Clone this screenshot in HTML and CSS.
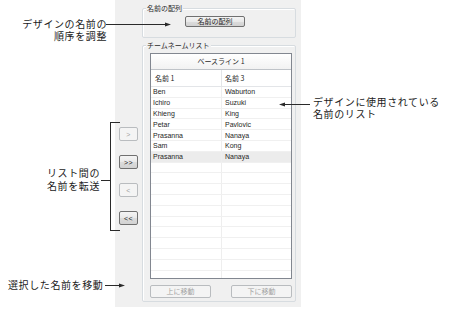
FILE: index.html
```html
<!DOCTYPE html>
<html lang="ja">
<head>
<meta charset="utf-8">
<title>チームネームリスト</title>
<link rel="stylesheet" href="styles.css">
</head>
<body>
<div class="page">
  <div class="panel">
    <div class="transfer">
      <div class="btn small disabled">&gt;</div>
      <div class="btn small">&gt;&gt;</div>
      <div class="btn small disabled">&lt;</div>
      <div class="btn small">&lt;&lt;</div>
    </div>
    <div class="main">
      <div class="group group-order">
        <span class="group-label">名前の配列</span>
        <div class="btn order-btn">名前の配列</div>
      </div>
      <div class="group group-list">
        <span class="group-label">チームネームリスト</span>
        <div class="list">
          <div class="list-title">ベースライン 1</div>
          <div class="row head"><div class="cell">名前 1</div><div class="cell">名前 3</div></div>
          <div class="row"><div class="cell">Ben</div><div class="cell">Waburton</div></div>
          <div class="row"><div class="cell">Ichiro</div><div class="cell">Suzuki</div></div>
          <div class="row"><div class="cell">Khieng</div><div class="cell">King</div></div>
          <div class="row"><div class="cell">Petar</div><div class="cell">Pavlovic</div></div>
          <div class="row"><div class="cell">Prasanna</div><div class="cell">Nanaya</div></div>
          <div class="row"><div class="cell">Sam</div><div class="cell">Kong</div></div>
          <div class="row selected"><div class="cell">Prasanna</div><div class="cell">Nanaya</div></div>
          <div class="row"><div class="cell"></div><div class="cell"></div></div>
          <div class="row"><div class="cell"></div><div class="cell"></div></div>
          <div class="row"><div class="cell"></div><div class="cell"></div></div>
          <div class="row"><div class="cell"></div><div class="cell"></div></div>
          <div class="row"><div class="cell"></div><div class="cell"></div></div>
          <div class="row"><div class="cell"></div><div class="cell"></div></div>
          <div class="row"><div class="cell"></div><div class="cell"></div></div>
          <div class="row"><div class="cell"></div><div class="cell"></div></div>
          <div class="row"><div class="cell"></div><div class="cell"></div></div>
          <div class="row"><div class="cell"></div><div class="cell"></div></div>
          <div class="row"><div class="cell"></div><div class="cell"></div></div>
        </div>
        <div class="move-row">
          <div class="btn move disabled">上に移動</div>
          <div class="btn move disabled">下に移動</div>
        </div>
      </div>
    </div>
  </div>

  <div class="note note-order">デザインの名前の<br>順序を調整</div>
  <div class="note note-list">デザインに使用されている<br>名前のリスト</div>
  <div class="note note-transfer">リスト間の<br>名前を転送</div>
  <div class="note note-move">選択した名前を移動</div>

  <svg class="leaders" width="451" height="329" viewBox="0 0 451 329" aria-hidden="true">
    <g fill="none" stroke="#2a2a2a" stroke-width="1" shape-rendering="crispEdges">
      <path d="M106 24.5H166"/>
      <path d="M310 104.5H284"/>
      <path d="M105 285.5H120"/>
      <path d="M120 122.5H110.5V230.5H120"/>
      <path d="M101 180.5H110"/>
    </g>
    <g fill="#2a2a2a">
      <polygon points="171,24.5 165,22.5 165,26.5"/>
      <polygon points="279,104.5 285,102.5 285,106.5"/>
      <polygon points="125,285.5 119,283.5 119,287.5"/>
    </g>
  </svg>
</div>
</body>
</html>
```

FILE: styles.css
```css
* {
  box-sizing: border-box;
  margin: 0;
  padding: 0;
}

html,
body {
  width: 451px;
  height: 329px;
  background: #ffffff;
  overflow: hidden;
}

body {
  font-family: "Liberation Sans", "Noto Sans CJK JP", sans-serif;
  font-size: 7px;
  color: #1e1e1e;
}

.page {
  position: relative;
  width: 451px;
  height: 329px;
}

/* ---------- dialog panel ---------- */
.panel {
  margin-left: 115px;
  width: 186px;
  height: 307px;
  background: #f0f0f0;
  display: flex;
}

.transfer {
  width: 27px;
  padding: 127px 0 0 4px;
  display: flex;
  flex-direction: column;
  gap: 14px;
}

.main {
  width: 154px;
  padding-top: 8px;
}

.btn {
  display: flex;
  align-items: center;
  justify-content: center;
  border: 1px solid #707070;
  border-radius: 2px;
  background: linear-gradient(#f4f4f4, #e9e9e9 50%, #dcdcdc 51%, #d2d2d2);
  color: #1e1e1e;
  font-family: "Noto Sans CJK JP", sans-serif;
  font-size: 7px;
  line-height: 1;
  white-space: nowrap;
}

.btn.disabled {
  border-color: #b9bcbf;
  background: #f4f4f4;
  color: #a2a2a2;
}

.small {
  width: 19px;
  height: 14px;
  font-family: "Liberation Sans", sans-serif;
  font-size: 7px;
  letter-spacing: 0.3px;
}

.group {
  position: relative;
  border: 1px solid #d7dce0;
  border-radius: 2px;
  box-shadow: inset 1px 1px 0 #ffffff;
}

.group-label {
  position: absolute;
  top: -6px;
  left: 3px;
  padding: 0 1px;
  background: #f0f0f0;
  font-family: "Noto Sans CJK JP", sans-serif;
  font-size: 7px;
  line-height: 10px;
  color: #2a2a2a;
}

.group-order {
  height: 30px;
  padding: 7px 0 0 42px;
}

.order-btn {
  width: 60px;
  height: 11px;
}

.group-list {
  margin-top: 7px;
  height: 257px;
  padding: 7px 3px 3px 7px;
}

/* ---------- list ---------- */
.list {
  width: 142px;
  height: 226px;
  border: 1px solid #828790;
  background: #ffffff;
  overflow: hidden;
}

.list-title {
  height: 16px;
  border-bottom: 1px solid #bfc3c8;
  background: linear-gradient(#ffffff, #f2f2f2);
  text-align: center;
  line-height: 15px;
  font-family: "Noto Sans CJK JP", sans-serif;
  color: #2a2a2a;
}

.row {
  display: grid;
  grid-template-columns: 71px 1fr;
  height: 10.8px;
  border-bottom: 1px solid #f0f0f0;
}

.row.head {
  height: 17px;
  border-bottom: 1px solid #e3e5e8;
  font-family: "Noto Sans CJK JP", sans-serif;
}

.row.selected {
  background: #ececec;
}

.cell {
  display: flex;
  align-items: center;
  padding-left: 3px;
  white-space: nowrap;
  overflow: hidden;
}

.cell:first-child {
  padding-left: 2px;
  border-right: 1px solid #eeeeee;
}

.row.head .cell:first-child {
  padding-left: 4px;
  border-right-color: #e3e5e8;
}

.move-row {
  display: flex;
  justify-content: space-between;
  width: 142px;
  margin-top: 6px;
}

.move {
  width: 61px;
  height: 13px;
}

/* ---------- annotations ---------- */
.note {
  position: absolute;
  font-family: "Noto Sans CJK JP", sans-serif;
  font-size: 10px;
  letter-spacing: 0.6px;
  line-height: 12px;
  color: #1a1a1a;
  white-space: nowrap;
}

.note-order {
  right: 344px;
  top: 18px;
  text-align: right;
}

.note-list {
  left: 313px;
  top: 96px;
}

.note-transfer {
  right: 351px;
  top: 166px;
  line-height: 13px;
  text-align: right;
}

.note-move {
  left: 8px;
  top: 279px;
}

.leaders {
  position: absolute;
  left: 0;
  top: 0;
  pointer-events: none;
}
```
